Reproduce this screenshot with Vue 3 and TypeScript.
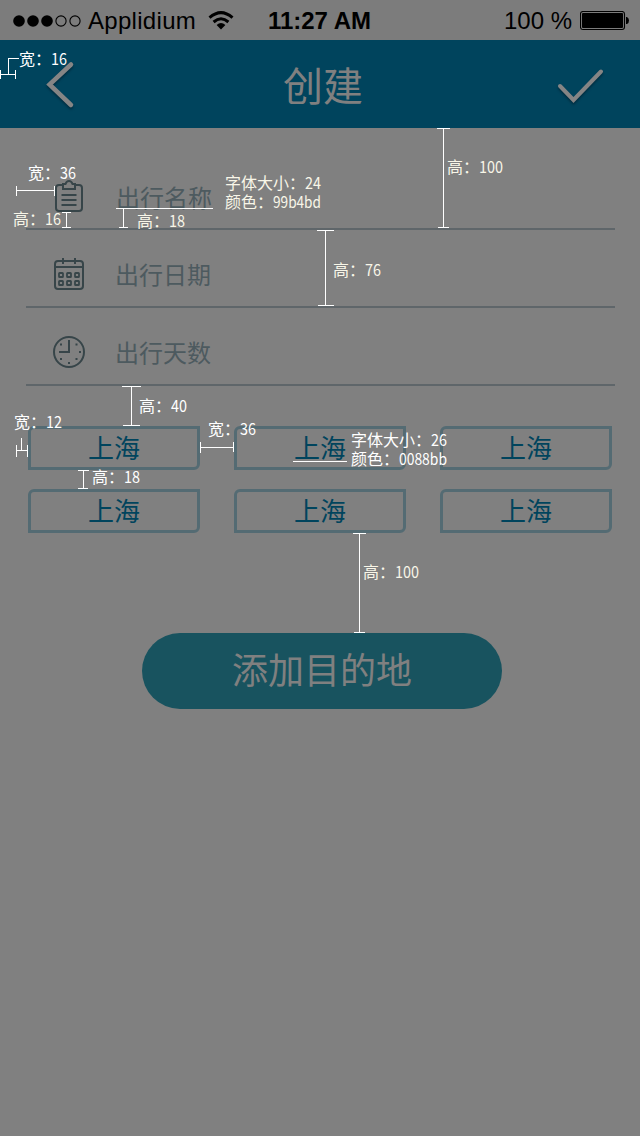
<script setup lang="ts">
interface Note {
  x: number
  y: number
  label: string
  value: string
  warm?: boolean
}

const cities: string[] = ['上海', '上海', '上海', '上海', '上海', '上海']

const notes: Note[] = [
  { x: 19, y: 65, label: '宽：', value: '16' },
  { x: 28, y: 179, label: '宽：', value: '36' },
  { x: 13, y: 225, label: '高：', value: '16', warm: true },
  { x: 137, y: 227, label: '高：', value: '18', warm: true },
  { x: 225, y: 189, label: '字体大小：', value: '24', warm: true },
  { x: 225, y: 208, label: '颜色：', value: '99b4bd', warm: true },
  { x: 447, y: 173, label: '高：', value: '100', warm: true },
  { x: 333, y: 276, label: '高：', value: '76', warm: true },
  { x: 139, y: 412, label: '高：', value: '40' },
  { x: 14, y: 428, label: '宽：', value: '12' },
  { x: 208, y: 435, label: '宽：', value: '36' },
  { x: 92, y: 483, label: '高：', value: '18' },
  { x: 351, y: 446, label: '字体大小：', value: '26' },
  { x: 351, y: 465, label: '颜色：', value: '0088bb' },
  { x: 363, y: 578, label: '高：', value: '100', warm: true },
]

const rules: string[] = [
  'M18.5 58.5H8.5V74.5M0 74.5H16M.5 70V79M15.5 70V79',
  'M16 190.5H55M16.5 186V196M54.5 186V196',
  'M66.5 212V228M62 212.5H71M62 227.5H71',
  'M116 208.5H213M123.5 208V228M119 227.5H128',
  'M443.5 128V228M437 128.5H450M438 227.5H449',
  'M325.5 230V306M317 230.5H334M318 305.5H334',
  'M131.5 386V426M122 386.5H141M123 425.5H140',
  'M16 450.5H28M16.5 445V457M27.5 445V457M21.5 438V451',
  'M200 447.5H234M200.5 442V453M233.5 442V452',
  'M83.5 470V489M78 470.5H89M78 488.5H88',
  'M293 461.5H347',
  'M359.5 533V633M353 533.5H366M354 632.5H365',
]
</script>

<template>
  <div class="screen">
    <div class="status">
      <div class="side">
        <svg class="signal" width="68" height="14" viewBox="0 0 68 14">
          <circle cx="6" cy="7" r="5.8" />
          <circle cx="20" cy="7" r="5.8" />
          <circle cx="34" cy="7" r="5.8" />
          <circle class="hollow" cx="48" cy="7" r="5.1" />
          <circle class="hollow" cx="62" cy="7" r="5.1" />
        </svg>
        <span class="carrier">Applidium</span>
        <svg class="wifi" width="26" height="20" viewBox="0 0 26 20">
          <path class="arc" d="M1.5 6.7Q13-3.5 24.5 6.7" />
          <path class="arc" d="M5.6 11Q13 4.6 20.4 11" />
          <path d="M8.6 14Q13 10.2 17.4 14L13 18.4Z" />
        </svg>
      </div>
      <span class="time">11:27 AM</span>
      <div class="side right">
        <span>100 %</span>
        <svg class="battery" width="49" height="20" viewBox="0 0 49 20">
          <rect class="case" x=".5" y=".5" width="44" height="18" rx="2.5" />
          <rect x="2" y="2" width="41" height="15" rx="1" />
          <path d="M46 6h1q2 1 2 3.500t-2 3.500h-1z" />
        </svg>
      </div>
    </div>

    <header class="bar">
      <svg class="back" width="36" height="56" viewBox="0 0 36 56">
        <path d="M29 8.500L7.500 28.500L29 49" />
      </svg>
      <h1>创建</h1>
      <svg class="done" width="52" height="44" viewBox="0 0 52 44">
        <path d="M5 18L18.500 32L46 3.500" />
      </svg>
    </header>

    <div class="form">
      <div class="row first">
        <svg class="icon" width="34" height="34" viewBox="0 0 34 34">
          <path d="M11 6H7Q4 6 4 9V29Q4 32 7 32H27Q30 32 30 29V9Q30 6 27 6H23" />
          <path d="M11 5H13.500Q14.500 2 17 2T20.500 5H23V10H11Z" />
          <path d="M9.500 16H24.500M9.500 21H24.500M9.500 26H24.500" />
        </svg>
        <span>出行名称</span>
      </div>
      <div class="row">
        <svg class="icon" width="34" height="34" viewBox="0 0 34 34">
          <rect x="3" y="4" width="28" height="28" rx="3" />
          <path d="M3 10H31M11 1V7M23 1V7" />
          <g class="days">
            <rect x="7" y="16" width="4" height="4" rx=".6" />
            <rect x="15" y="16" width="4" height="4" rx=".6" />
            <rect x="23" y="16" width="4" height="4" rx=".6" />
            <rect x="7" y="24" width="4" height="4" rx=".6" />
            <rect x="15" y="24" width="4" height="4" rx=".6" />
            <rect x="23" y="24" width="4" height="4" rx=".6" />
          </g>
        </svg>
        <span>出行日期</span>
      </div>
      <div class="row">
        <svg class="icon" width="34" height="34" viewBox="0 0 34 34">
          <circle cx="17" cy="17" r="15" />
          <path d="M17 5V17H7" />
          <path d="M27 17h2M16 28h2M8 9.500h2M23.500 9.500h2M8 24h2M23.500 24h2" />
        </svg>
        <span>出行天数</span>
      </div>
    </div>

    <div class="cities">
      <div v-for="(city, i) in cities" :key="i" class="city">{{ city }}</div>
    </div>

    <button class="add" type="button">添加目的地</button>

    <svg class="notes" width="640" height="1136" viewBox="0 0 640 1136">
      <path v-for="(d, i) in rules" :key="i" class="rule" :d="d" />
      <g v-for="(n, i) in notes" :key="'n' + i" :class="{ warm: n.warm }">
        <text :x="n.x" :y="n.y">{{ n.label }}</text>
        <text :x="n.x + n.label.length * 16" :y="n.y" :textLength="n.value.length * 8" lengthAdjust="spacingAndGlyphs">{{ n.value }}</text>
      </g>
    </svg>
  </div>
</template>

<style>
body {
  margin: 0;
  background: #808080;
}
</style>

<style scoped>
.screen {
  position: relative;
  width: 640px;
  height: 1136px;
  overflow: hidden;
  background: #808080;
  font-family: "Liberation Sans", "Noto Sans CJK SC", sans-serif;
}

.status {
  display: grid;
  grid-template-columns: 1fr auto 1fr;
  align-items: center;
  height: 40px;
  padding: 2px 11px 0 13px;
  box-sizing: border-box;
  background: #7c7c7c;
  color: #000;
  font-size: 24px;
  line-height: 38px;
}

.side {
  display: flex;
  align-items: center;
}

.right {
  justify-content: flex-end;
}

.carrier {
  margin-left: 7px;
  letter-spacing: 0.3px;
}

.wifi {
  margin-left: 12px;
}

.battery {
  margin-left: 8px;
}

.time {
  margin-right: 3px;
  font-weight: 700;
}

.hollow,
.case {
  fill: none;
  stroke: #000;
  stroke-width: 1.1;
}

.arc {
  fill: none;
  stroke: #000;
  stroke-width: 3;
}

.bar {
  display: grid;
  grid-template-columns: 1fr auto 1fr;
  align-items: center;
  height: 88px;
  padding: 0 33px 0 42px;
  box-sizing: border-box;
  background: #00445d;
}

.bar h1 {
  margin: 0 0 0 -3px;
  padding-top: 6px;
  color: #808080;
  font-size: 40px;
  font-weight: 400;
  line-height: 82px;
}

.bar path {
  fill: none;
  stroke: #858585;
  stroke-width: 4.5;
  stroke-linecap: round;
  stroke-linejoin: miter;
  filter: drop-shadow(0 2px 1px rgba(0, 30, 45, 0.6));
}

.bar .done {
  justify-self: end;
  margin-top: 12px;
}

.bar .done path {
  stroke-width: 4;
}

.form {
  margin: 0 25px 0 26px;
}

.row {
  display: flex;
  align-items: center;
  height: 78px;
  padding: 12px 0 0 26px;
  box-sizing: border-box;
  border-bottom: 2px solid #5f666a;
  color: #4d5a5f;
  font-size: 24px;
  line-height: 34px;
}

.row span {
  margin-left: 29px;
  padding-top: 4px;
}

.first {
  height: 102px;
  padding-top: 36px;
}

.first span {
  margin-left: 30px;
  padding-top: 5px;
}

.icon {
  fill: none;
  stroke: #374549;
  stroke-width: 2;
}

.days {
  stroke-width: 1.8;
}

.cities {
  display: grid;
  grid-template-columns: repeat(3, 172px);
  gap: 19px 34px;
  margin: 40px 0 0 28px;
}

.city {
  height: 44px;
  box-sizing: border-box;
  border: 3px solid #546b73;
  border-radius: 6px 0;
  color: #00445d;
  font-size: 26px;
  line-height: 40px;
  text-align: center;
}

.add {
  display: block;
  width: 360px;
  height: 76px;
  margin: 100px 0 0 142px;
  padding: 2px 0 0;
  border: 0;
  border-radius: 38px;
  background: #18535f;
  color: #808080;
  font: inherit;
  font-size: 36px;
  line-height: 74px;
}

.notes {
  position: absolute;
  inset: 0;
  fill: #fff;
  font-family: "Noto Sans CJK SC", sans-serif;
  font-size: 16px;
}

.notes .warm {
  fill: #f8f6e8;
}

.rule {
  fill: none;
  stroke: #fff;
  stroke-width: 1;
  shape-rendering: crispEdges;
}
</style>
